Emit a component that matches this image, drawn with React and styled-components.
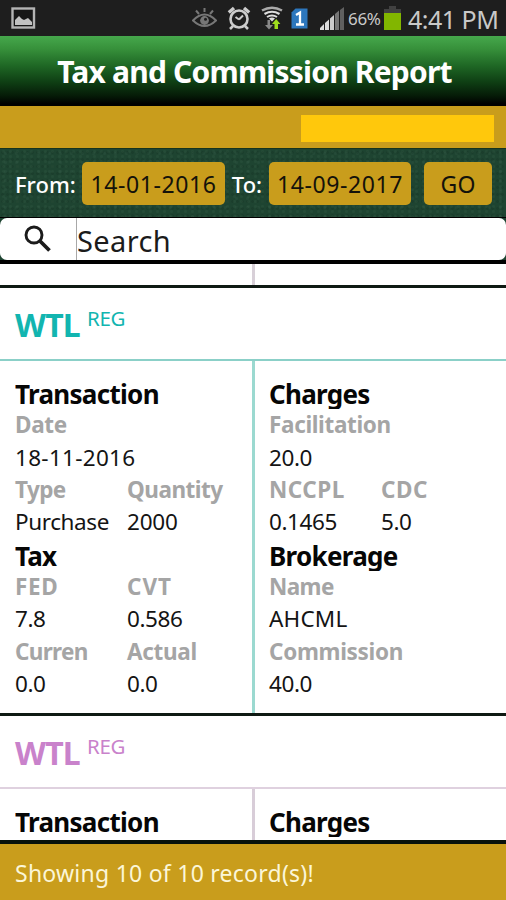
import React from "react"
import styled, { createGlobalStyle } from "styled-components"

const GlobalStyle = createGlobalStyle`
  * {
    box-sizing: border-box;
  }
  body {
    margin: 0;
    background: #0c1710;
    font-family: "Noto Sans", "Open Sans", sans-serif;
  }
`

const Screen = styled.div`
  display: flex;
  flex-direction: column;
  width: 100%;
  height: 900px;
  overflow: hidden;
  white-space: nowrap;
`

const StatusBar = styled.div`
  display: flex;
  align-items: center;
  flex: none;
  height: 36px;
  padding-left: 11px;
  background: #1e1e1e;
  color: #c9c9c9;

  svg {
    display: block;
    flex: none;
  }
  .percent {
    width: 36px;
    margin-left: 3px;
    font-size: 17px;
    letter-spacing: -0.3px;
  }
  .clock {
    margin-left: 7px;
    padding-top: 2px;
    font-size: 25px;
    line-height: 34px;
    letter-spacing: -0.5px;
  }
`

const StatusIcons = styled.div`
  display: flex;
  align-items: center;
  margin-left: 156px;

  svg:nth-child(2) {
    margin-left: 10px;
  }
  svg:nth-child(3) {
    margin-left: 10px;
  }
  svg:nth-child(4) {
    margin-left: 8px;
  }
  svg:nth-child(5) {
    margin-left: 12px;
  }
`

const Header = styled.h1`
  flex: none;
  height: 70px;
  margin: 0;
  padding-left: 3px;
  background: linear-gradient(#46a84c 0%, #37913b 18%, #1f6825 42%, #0f4014 65%, #051a07 86%, #000 97%);
  color: #fff;
  font-size: 30px;
  font-weight: 700;
  line-height: 71px;
  letter-spacing: -0.8px;
  text-align: center;
`

const AccountBar = styled.div`
  display: flex;
  justify-content: flex-end;
  flex: none;
  height: 42px;
  padding: 9px 12px 6px;
  background: #c99d1c;
`

const AccountName = styled.div`
  width: 193px;
  background: #ffc80c;
`

const FilterBar = styled.div`
  display: flex;
  align-items: center;
  flex: none;
  height: 69px;
  padding: 1px 14px 0 15px;
  border-top: 1px solid #16331f;
  background-color: #1e4431;
  background-image:
    radial-gradient(circle, rgba(80, 125, 95, 0.13) 0 1px, transparent 2px),
    radial-gradient(circle, rgba(5, 30, 18, 0.14) 0 1px, transparent 2px),
    radial-gradient(circle, rgba(80, 120, 100, 0.13) 0 1px, transparent 2px);
  background-size: 7px 5px, 5px 7px, 11px 9px;
  color: #fff;
  font-size: 22px;
`

const FilterLabel = styled.label`
  width: ${(p) => p.$width}px;
  font-weight: 500;
  letter-spacing: ${(p) => p.$spacing || 0}px;
`

const GoldButton = styled.button`
  width: ${(p) => p.$width}px;
  height: 43px;
  margin: 0 ${(p) => p.$gap || 0}px 0 0;
  padding: 0;
  border: 0;
  border-radius: 5px;
  background: #c99d1c;
  color: #14120a;
  font: 23px/44px "Noto Sans", "Open Sans", sans-serif;
  letter-spacing: ${(p) => p.$spacing || 0}px;
`

const SearchWrap = styled.div`
  flex: none;
  height: 47px;
  padding: 1px 0 4px;
  background: linear-gradient(#000 0 1px, #1d4330 1px 43px, #000 43px);
`

const SearchBox = styled.div`
  display: flex;
  height: 42px;
  border-radius: 7px;
  background: #fff;

  .icon {
    width: 77px;
    padding: 6px 0 0 24px;
    border-right: 1px solid #a8a8a8;
  }
  .placeholder {
    color: #1b1b1b;
    font-size: 29px;
    line-height: 45px;
    letter-spacing: 0.4px;
  }
`

const List = styled.div`
  flex: 1;
  min-height: 0;
  overflow: hidden;
  background: #fff;
`

const Card = styled.div`
  border-bottom: 3px solid #0f1a13;
`

const CardHeader = styled.div`
  display: flex;
  height: 73px;
  padding-left: 15px;
  border-bottom: 2px solid ${(p) => p.$line};
  color: ${(p) => p.$color};

  .symbol {
    width: 72px;
    font-size: 32px;
    font-weight: 700;
    line-height: 73px;
    letter-spacing: -0.8px;
  }
  .market {
    font-size: 20.5px;
    line-height: 61px;
    letter-spacing: -0.3px;
  }
`

const CardBody = styled.div`
  display: grid;
  grid-template-columns: 255px 1fr;
  height: ${(p) => p.$height}px;
`

const Column = styled.div`
  padding: ${(p) => (p.$empty ? 0 : "16px 0 0 15px")};
  border-right: ${(p) => (p.$line ? `3px solid ${p.$line}` : "0")};

  & + & {
    padding-left: 14px;
  }
`

const Heading = styled.h2`
  height: 32.3px;
  margin: 0;
  overflow: hidden;
  color: #060606;
  font-size: 26px;
  font-weight: 700;
  line-height: 34px;
  letter-spacing: -0.7px;
`

const Fields = styled.div`
  display: grid;
  grid-template-columns: 112px 1fr;
  height: 64.7px;
`

const Field = styled.div`
  font-size: 22.5px;
  line-height: 31px;

  .label {
    height: 32.3px;
    color: #a5a5a5;
    font-weight: 700;
    letter-spacing: ${(p) => p.$labelSpacing || 0}px;
  }
  .value {
    color: #141414;
    letter-spacing: ${(p) => p.$valueSpacing || 0}px;
  }
`

const Footer = styled.div`
  flex: none;
  height: 60px;
  padding-left: 15px;
  border-top: 4px solid #08120b;
  background: #c99d1c;
  color: #fbf6d8;
  font-size: 23px;
  line-height: 58px;
  letter-spacing: 0.25px;
`

const PictureIcon = () => (
  <svg width="25" height="22" viewBox="0 0 25 22">
    <rect x="1.5" y="1.5" width="21.5" height="19" fill="#171717" stroke="#b4b4b4" strokeWidth="2.4" />
    <path d="M4 18v-5l4-4 3 3 2 1 4-2 4 4v3z" fill="#c2c2c2" />
  </svg>
)

const EyeIcon = () => (
  <svg width="25" height="22" viewBox="0 0 25 22" fill="none" stroke="#777" strokeWidth="2">
    <path d="M1 13.5Q12.5 1.5 24 13.5Q12.5 24.5 1 13.5z" />
    <circle cx="12.5" cy="13.5" r="4.4" fill="#777" stroke="none" />
    <circle cx="13.5" cy="12.3" r="1.5" fill="#1e1e1e" stroke="none" />
    <path d="M12.5 1v4M4 3.5l3 3.5M21 3.5L18 7" />
  </svg>
)

const AlarmIcon = () => (
  <svg width="24" height="24" viewBox="0 0 24 24" fill="none" stroke="#ccc" strokeWidth="2.6">
    <circle cx="12" cy="13" r="8.5" />
    <path d="M12 13.5l4-4M12 13.5L8.500 11" strokeWidth="2" />
    <path d="M1.800 6.500L7 2M22.200 6.500L17 2" strokeWidth="3.400" />
    <path d="M6 20l-3 3M18 20l3 3" />
  </svg>
)

const WifiIcon = () => (
  <svg width="22" height="24" viewBox="0 0 22 24" fill="none">
    <path d="M1 4.500Q11 -1 21 4.500" stroke="#aaa" strokeWidth="2.400" />
    <path d="M3.500 8Q11 3.500 18.500 8" stroke="#ddd" strokeWidth="2.200" />
    <path d="M6 11Q11 7.800 16 11" stroke="#ddd" strokeWidth="2" />
    <path d="M8 12.500Q11 10.500 14 12.500L11 15.500z" fill="#ddd" />
    <path d="M6.500 14h2.500v5H12l-4 4.500-4-4.500h2.500z" fill="#888" />
    <path d="M13.500 23v-5H11l4.200-5 4.200 5H17v5z" fill="#9fdc1e" />
  </svg>
)

const SimIcon = () => (
  <svg width="17" height="21" viewBox="0 0 17 21">
    <path d="M4.500 0.500H16.500V20.500H0.500V4.500z" fill="#2d77bd" />
    <path d="M5 7L9 4.500V16M5 16.500h8" fill="none" stroke="#fff" strokeWidth="2.300" />
  </svg>
)

const SignalIcon = () => (
  <svg width="25" height="23" viewBox="0 0 25 23">
    <path d="M0 23v-2l4-4v6z" fill="#ddd" />
    <path d="M5 23v-7l4-3.500V23z" fill="#ddd" />
    <path d="M10 23V11.500L14 8v15z" fill="#ccc" />
    <path d="M15 23V7l4-3.500V23z" fill="#777" />
    <path d="M20 23V3l4-3v23z" fill="#606060" />
  </svg>
)

const BatteryIcon = () => (
  <svg width="17" height="24" viewBox="0 0 17 24">
    <path d="M5 0h7v3h5v5H0V3h5z" fill="#414141" />
    <rect y="7" width="17" height="17" fill="#82b600" />
  </svg>
)

const SearchIcon = () => (
  <svg width="30" height="30" viewBox="0 0 30 30" fill="none" stroke="#1b1b1b">
    <circle cx="10" cy="11" r="8" strokeWidth="2.900" />
    <path d="M16 17L25.500 26.500" strokeWidth="3.800" />
  </svg>
)

const FieldItem = ({ label, value, ls, vs }) => (
  <Field $labelSpacing={ls} $valueSpacing={vs}>
    <div className="label">{label}</div>
    <div className="value">{value}</div>
  </Field>
)

const RecordHeader = ({ color, line }) => (
  <CardHeader $color={color} $line={line}>
    <span className="symbol">WTL</span>
    <span className="market">REG</span>
  </CardHeader>
)

const App = () => {
  return (
    <>
      <GlobalStyle />
      <Screen>
        <StatusBar>
          <PictureIcon />
          <StatusIcons>
            <EyeIcon />
            <AlarmIcon />
            <WifiIcon />
            <SimIcon />
            <SignalIcon />
          </StatusIcons>
          <span className="percent">66%</span>
          <BatteryIcon />
          <span className="clock">4:41 PM</span>
        </StatusBar>
        <Header>Tax and Commission Report</Header>
        <AccountBar>
          <AccountName />
        </AccountBar>
        <FilterBar>
          <FilterLabel $width={67.5}>From:</FilterLabel>
          <GoldButton $width={143} $gap={7} $spacing={0.6}>14-01-2016</GoldButton>
          <FilterLabel $width={37}>To:</FilterLabel>
          <GoldButton $width={143} $gap={13} $spacing={0.6}>14-09-2017</GoldButton>
          <GoldButton $width={68} $spacing={0.3}>GO</GoldButton>
        </FilterBar>
        <SearchWrap>
          <SearchBox>
            <div className="icon">
              <SearchIcon />
            </div>
            <span className="placeholder">Search</span>
          </SearchBox>
        </SearchWrap>
        <List>
          <Card>
            <CardBody $height={21}>
              <Column $empty $line="#d8d0d8" />
              <Column $empty />
            </CardBody>
          </Card>
          <Card>
            <RecordHeader color="#12b5b0" line="#8bd0c8" />
            <CardBody $height={352}>
              <Column $line="#9bd9d0">
                <Heading>Transaction</Heading>
                <Fields>
                  <FieldItem label="Date" value="18-11-2016" ls={-0.3} vs={0.3} />
                </Fields>
                <Fields>
                  <FieldItem label="Type" value="Purchase" ls={-0.6} vs={-0.4} />
                  <FieldItem label="Quantity" value="2000" ls={-0.5} vs={-0.2} />
                </Fields>
                <Heading>Tax</Heading>
                <Fields>
                  <FieldItem label="FED" value="7.8" ls={0.7} vs={-0.4} />
                  <FieldItem label="CVT" value="0.586" ls={1} vs={-0.4} />
                </Fields>
                <Fields>
                  <FieldItem label="Curren" value="0.0" ls={-0.7} vs={-0.4} />
                  <FieldItem label="Actual" value="0.0" ls={-0.3} vs={-0.4} />
                </Fields>
              </Column>
              <Column>
                <Heading>Charges</Heading>
                <Fields>
                  <FieldItem label="Facilitation" value="20.0" ls={-0.35} vs={-0.4} />
                </Fields>
                <Fields>
                  <FieldItem label="NCCPL" value="0.1465" ls={0.5} vs={-0.4} />
                  <FieldItem label="CDC" value="5.0" ls={0.6} vs={-0.4} />
                </Fields>
                <Heading>Brokerage</Heading>
                <Fields>
                  <FieldItem label="Name" value="AHCML" ls={-0.6} vs={0.2} />
                </Fields>
                <Fields>
                  <FieldItem label="Commission" value="40.0" ls={-0.3} vs={-0.4} />
                </Fields>
              </Column>
            </CardBody>
          </Card>
          <Card>
            <RecordHeader color="#c982cb" line="#dfd1df" />
            <CardBody $height={60}>
              <Column $line="#d8cdd8">
                <Heading>Transaction</Heading>
              </Column>
              <Column>
                <Heading>Charges</Heading>
              </Column>
            </CardBody>
          </Card>
        </List>
        <Footer>Showing 10 of 10 record(s)!</Footer>
      </Screen>
    </>
  )
}

export default App
